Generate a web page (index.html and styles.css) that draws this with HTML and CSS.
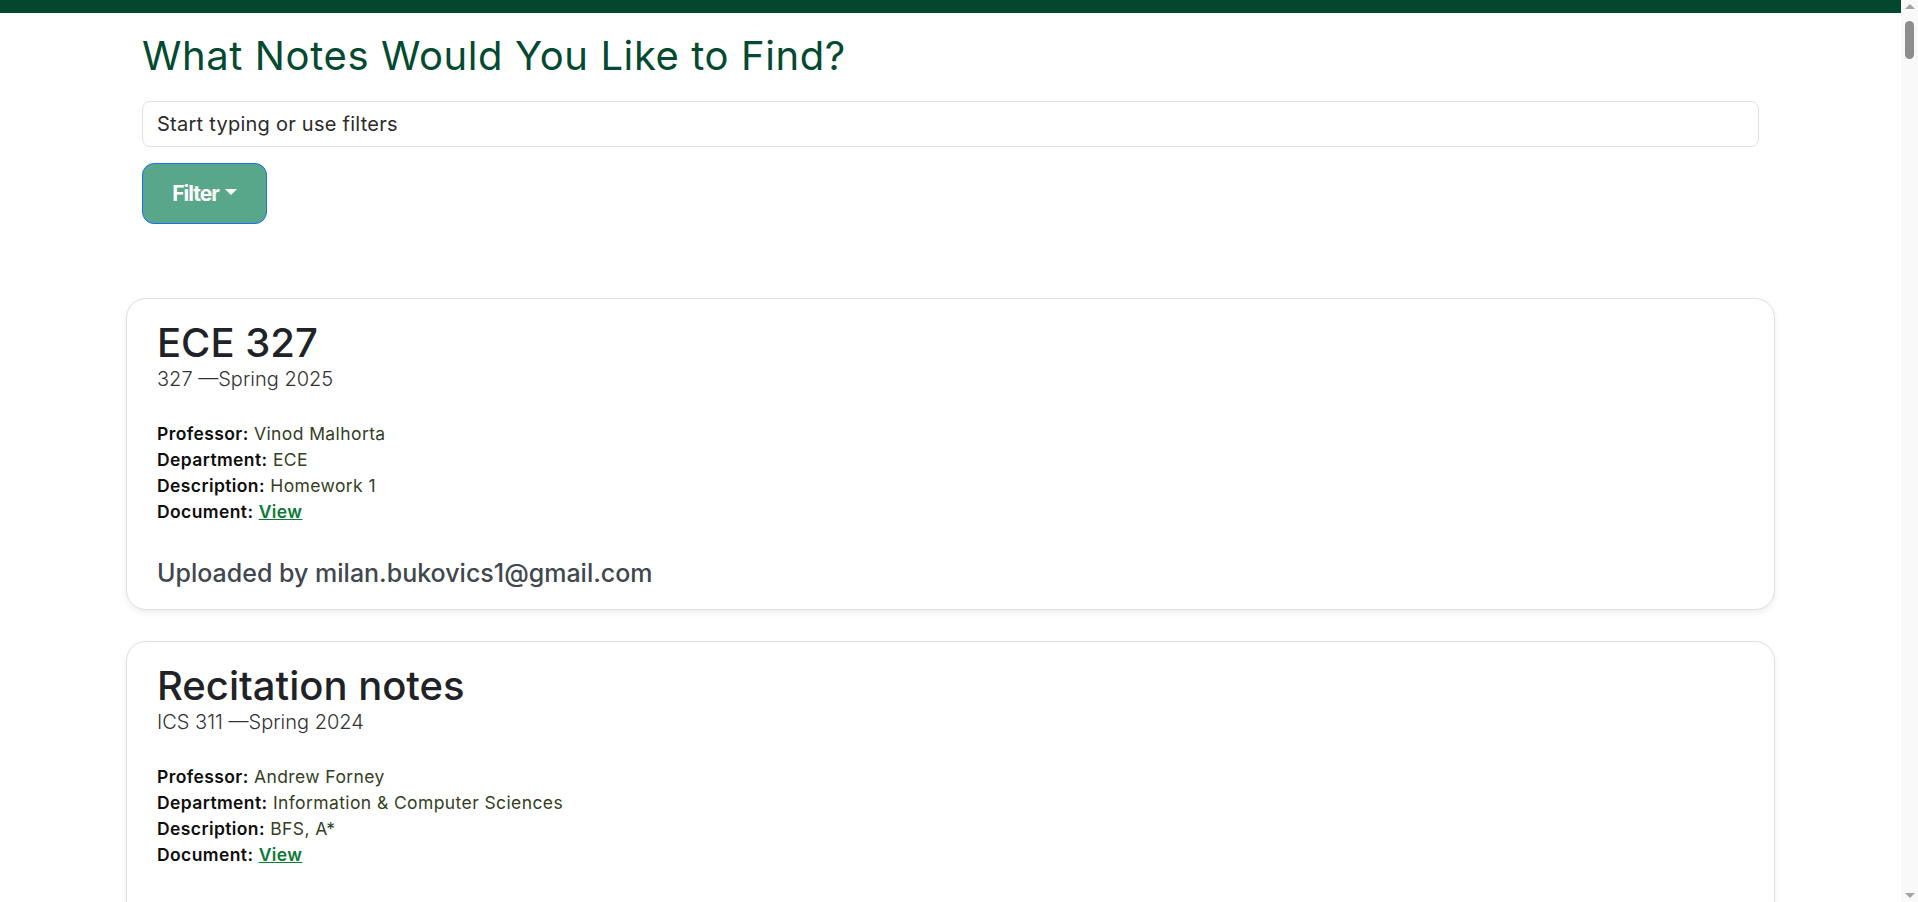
FILE: index.html
```html
<!DOCTYPE html>
<html lang="en">
<head>
<meta charset="utf-8">
<title>Find Notes</title>
<link rel="stylesheet" href="styles.css">
</head>
<body>
<div class="topbar"></div>
<main class="page">
  <section class="search">
    <h1 class="search-title">What Notes Would You Like to Find?</h1>
    <input class="search-input" type="text" placeholder="Start typing or use filters">
    <button class="filter-btn" type="button"><span class="filter-label">Filter</span><span class="caret"></span></button>
  </section>

  <section class="results">
    <article class="note-card">
      <h2 class="note-title">ECE 327</h2>
      <p class="note-sub">327 —Spring 2025</p>
      <ul class="note-fields">
        <li><b>Professor:</b> <span class="val">Vinod Malhorta</span></li>
        <li><b>Department:</b> <span class="val">ECE</span></li>
        <li><b>Description:</b> <span class="val">Homework 1</span></li>
        <li><b>Document:</b> <a class="doc-link" href="#">View</a></li>
      </ul>
      <p class="note-uploader">Uploaded by milan.bukovics1@gmail.com</p>
    </article>

    <article class="note-card">
      <h2 class="note-title">Recitation notes</h2>
      <p class="note-sub">ICS 311 —Spring 2024</p>
      <ul class="note-fields">
        <li><b>Professor:</b> <span class="val">Andrew Forney</span></li>
        <li><b>Department:</b> <span class="val">Information &amp; Computer Sciences</span></li>
        <li><b>Description:</b> <span class="val">BFS, A*</span></li>
        <li><b>Document:</b> <a class="doc-link" href="#">View</a></li>
      </ul>
      <p class="note-uploader">Uploaded by kai.nakamura@hawaii.edu</p>
    </article>

    <article class="note-card">
      <h2 class="note-title">Midterm review</h2>
      <p class="note-sub">ICS 211 —Fall 2024</p>
      <ul class="note-fields">
        <li><b>Professor:</b> <span class="val">Carleton Moore</span></li>
        <li><b>Department:</b> <span class="val">Information &amp; Computer Sciences</span></li>
        <li><b>Description:</b> <span class="val">Linked lists, stacks, queues</span></li>
        <li><b>Document:</b> <a class="doc-link" href="#">View</a></li>
      </ul>
      <p class="note-uploader">Uploaded by leilani.k@hawaii.edu</p>
    </article>

    <article class="note-card">
      <h2 class="note-title">Lecture 4 slides</h2>
      <p class="note-sub">MATH 242 —Fall 2024</p>
      <ul class="note-fields">
        <li><b>Professor:</b> <span class="val">Monique Chyba</span></li>
        <li><b>Department:</b> <span class="val">Mathematics</span></li>
        <li><b>Description:</b> <span class="val">Integration by parts</span></li>
        <li><b>Document:</b> <a class="doc-link" href="#">View</a></li>
      </ul>
      <p class="note-uploader">Uploaded by noah.pua@hawaii.edu</p>
    </article>

    <article class="note-card">
      <h2 class="note-title">Lab 2 notes</h2>
      <p class="note-sub">EE 160 —Spring 2025</p>
      <ul class="note-fields">
        <li><b>Professor:</b> <span class="val">Vinod Malhorta</span></li>
        <li><b>Department:</b> <span class="val">ECE</span></li>
        <li><b>Description:</b> <span class="val">Pointers and arrays</span></li>
        <li><b>Document:</b> <a class="doc-link" href="#">View</a></li>
      </ul>
      <p class="note-uploader">Uploaded by milan.bukovics1@gmail.com</p>
    </article>

    <article class="note-card">
      <h2 class="note-title">Final study guide</h2>
      <p class="note-sub">ICS 311 —Spring 2024</p>
      <ul class="note-fields">
        <li><b>Professor:</b> <span class="val">Andrew Forney</span></li>
        <li><b>Department:</b> <span class="val">Information &amp; Computer Sciences</span></li>
        <li><b>Description:</b> <span class="val">Dynamic programming</span></li>
        <li><b>Document:</b> <a class="doc-link" href="#">View</a></li>
      </ul>
      <p class="note-uploader">Uploaded by kai.nakamura@hawaii.edu</p>
    </article>
  </section>
</main>
<div class="scrollbar" aria-hidden="true">
  <span class="sb-arrow sb-up"></span>
  <span class="sb-thumb"></span>
  <span class="sb-track"></span>
  <span class="sb-arrow sb-down"></span>
</div>
</body>
</html>
```

FILE: styles.css
```css
* { box-sizing: border-box; }

html, body {
  margin: 0;
  padding: 0;
  background: #ffffff;
}

body {
  font-family: Inter, "Noto Sans", "DejaVu Sans", sans-serif;
  color: #212529;
  padding-right: 17px;
}

.topbar {
  height: 13px;
  background: #03472f;
}

.page {
  max-width: 1649px;
  margin: 0 auto;
  padding-bottom: 40px;
}

.search {
  padding: 0 16px;
  display: flex;
  flex-direction: column;
  align-items: flex-start;
}

.search-title {
  margin: 19px 0 0;
  font-size: 40px;
  line-height: 48px;
  font-weight: 400;
  color: #034a30;
  letter-spacing: 0.6px;
}

.search-input {
  margin-top: 21px;
  width: 100%;
  height: 46px;
  padding: 7px 14px;
  font-family: inherit;
  font-size: 20px;
  line-height: 30px;
  letter-spacing: 0.25px;
  color: #212529;
  border: 1px solid #dee2e6;
  border-radius: 8px;
  outline: none;
  background: #fff;
}

.search-input::placeholder {
  color: #2b2b2b;
  opacity: 1;
}

.filter-btn {
  margin-top: 16px;
  height: 61px;
  width: 125px;
  display: flex;
  align-items: center;
  justify-content: center;
  gap: 6px;
  background: #58a78a;
  border: 1px solid #1b6ef3;
  border-radius: 12px;
  color: #fff;
  font-family: inherit;
  font-size: 21px;
  font-weight: 700;
  letter-spacing: -1px;
  padding: 0;
  cursor: pointer;
}

.caret {
  display: inline-block;
  width: 0;
  height: 0;
  border-top: 6px solid #fff;
  border-left: 6px solid transparent;
  border-right: 6px solid transparent;
  margin-top: -3px;
}

.results {
  margin-top: 74px;
  display: flex;
  flex-direction: column;
  gap: 31px;
}

.note-card {
  border: 1px solid #dedee6;
  border-radius: 20px;
  background: #fff;
  box-shadow: 0 3px 6px rgba(0, 0, 0, 0.07);
  padding: 20px 30px 21px;
}

.note-title {
  margin: 0;
  font-size: 40px;
  line-height: 48px;
  font-weight: 500;
  color: #1f2226;
}

.note-sub {
  margin: 0;
  font-size: 20px;
  line-height: 24px;
  font-weight: 300;
  color: #333;
}

.note-fields {
  list-style: none;
  margin: 30px 0 0;
  padding: 0;
  font-size: 17.5px;
  line-height: 26px;
  letter-spacing: 0.4px;
}

.note-fields b {
  font-weight: 600;
  color: #0e0e0e;
}

.val {
  color: #33401f;
}

.doc-link {
  color: #0b7a35;
  font-weight: 600;
  text-decoration: underline;
}

.note-uploader {
  margin: 33px 0 0;
  font-size: 25px;
  line-height: 30px;
  font-weight: 500;
  color: #41474f;
}

/* imitation of the browser's classic scrollbar */
.scrollbar {
  position: fixed;
  top: 0;
  right: 0;
  width: 17px;
  height: 100vh;
  background: #f9f9f9;
  display: flex;
  flex-direction: column;
  align-items: center;
}

.sb-arrow {
  width: 0;
  height: 0;
  border-left: 5px solid transparent;
  border-right: 5px solid transparent;
  flex: none;
}

.sb-up {
  margin-top: 4px;
  border-bottom: 5px solid #a3a3a3;
}

.sb-down {
  margin-bottom: 4px;
  border-top: 5px solid #a3a3a3;
}

.sb-thumb {
  margin-top: 12px;
  width: 9px;
  height: 38px;
  border-radius: 5px;
  background: #8d8d8d;
  flex: none;
}

.sb-track {
  flex: 1;
}
```
